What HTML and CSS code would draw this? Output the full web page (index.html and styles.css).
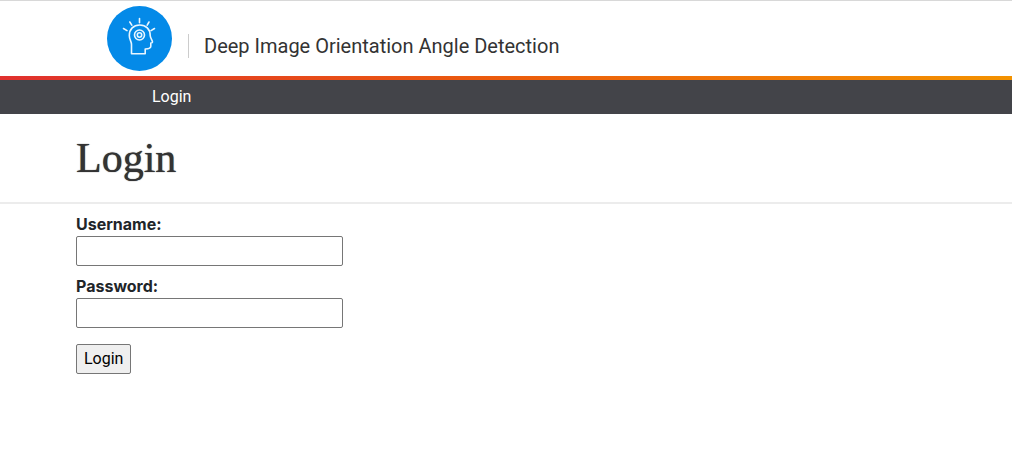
FILE: index.html
```html
<!DOCTYPE html>
<html lang="en">
<head>
<meta charset="utf-8">
<meta name="viewport" content="width=device-width, initial-scale=1">
<title>Login</title>
<link rel="stylesheet" href="styles.css">
</head>
<body>
<header class="site-header">
  <a class="logo" href="#" aria-label="Home">
    <svg viewBox="0 0 65 65" width="65" height="65" aria-hidden="true">
      <circle cx="32.5" cy="32.5" r="32.5" fill="#048ae8"/>
      <g fill="none" stroke="#e9f6ff" stroke-width="1.6" stroke-linecap="round" stroke-linejoin="round">
        <path d="M24.5 47.7V38.5C24.5 35.5 22.3 33.5 22.3 29.5C22.3 23 26.5 19 32.7 19C39 19 43.2 23.2 43.2 29.5C43.2 32 45.5 34.3 45.5 36C45.5 36.8 44.6 37 43.8 37V40.2C43.8 42.3 42.5 42.9 38.2 43V47.7Z"/>
        <circle cx="32.5" cy="29" r="5"/>
        <circle cx="32.5" cy="29" r="2.2"/>
        <path d="M32.5 12.5V16.7M22.8 16L24.8 19.2M42 16L40.2 19.2M16.5 22.5L20 24.6M47.5 22.5L44 24.6"/>
      </g>
    </svg>
  </a>
  <span class="site-name">Deep Image Orientation Angle Detection</span>
</header>
<nav class="nav"><a class="nav-link" href="#">Login</a></nav>
<main>
  <div class="page-title"><h1 class="heading">Login</h1></div>
  <form class="login-form">
    <label class="label" for="username">Username:</label>
    <input class="field" id="username" name="username" type="text">
    <label class="label" for="password">Password:</label>
    <input class="field" id="password" name="password" type="password">
    <button class="submit" type="submit">Login</button>
  </form>
</main>
</body>
</html>
```
FILE: styles.css
```css
* { box-sizing: border-box; }
body {
  margin: 0;
  background: #fff;
  color: #212529;
  font: 16px/24px Inter, Roboto, sans-serif;
}
.site-header {
  display: flex;
  align-items: flex-start;
  gap: 16px;
  padding: 5px 16px 5px 107px;
  border-top: 1px solid #d8d8d8;
}
.logo { display: block; height: 65px; }
.logo svg { display: block; }
.site-name {
  margin-top: 28px;
  padding-left: 15px;
  border-left: 1px solid #ccc;
  color: #333;
  font: 20px/24px Roboto, sans-serif;
}
.nav {
  padding: 5px 152px;
  background: #434449;
  background-clip: padding-box;
  border-top: 4px solid;
  border-image: linear-gradient(to right, #e0302e, #eb5c0c 50%, #f39200) 1;
}
.nav-link {
  display: block;
  color: #fff;
  font-family: Roboto, sans-serif;
  text-decoration: none;
}
.page-title {
  padding: 20px 76px;
  border-bottom: 2px solid #ececec;
}
.heading {
  margin: 0;
  color: #333;
  font: 400 42px/48px "Liberation Serif", serif;
  text-shadow: 0 0 1px #333;
}
.login-form {
  display: flex;
  flex-direction: column;
  align-items: flex-start;
  padding: 8px 76px;
}
.label { font-weight: 700; }
.field {
  width: 267px;
  max-width: 100%;
  height: 30px;
  margin: 0 0 8px;
  padding: 1px 2px;
  background: #fff;
  border: 1px solid #767676;
  border-radius: 2px;
  font: inherit;
}
.submit {
  height: 30px;
  margin-top: 8px;
  padding: 1px 7px;
  background: #efefef;
  border: 1px solid #767676;
  border-radius: 2px;
  color: #000;
  font: 16px/24px Roboto, sans-serif;
}
```
